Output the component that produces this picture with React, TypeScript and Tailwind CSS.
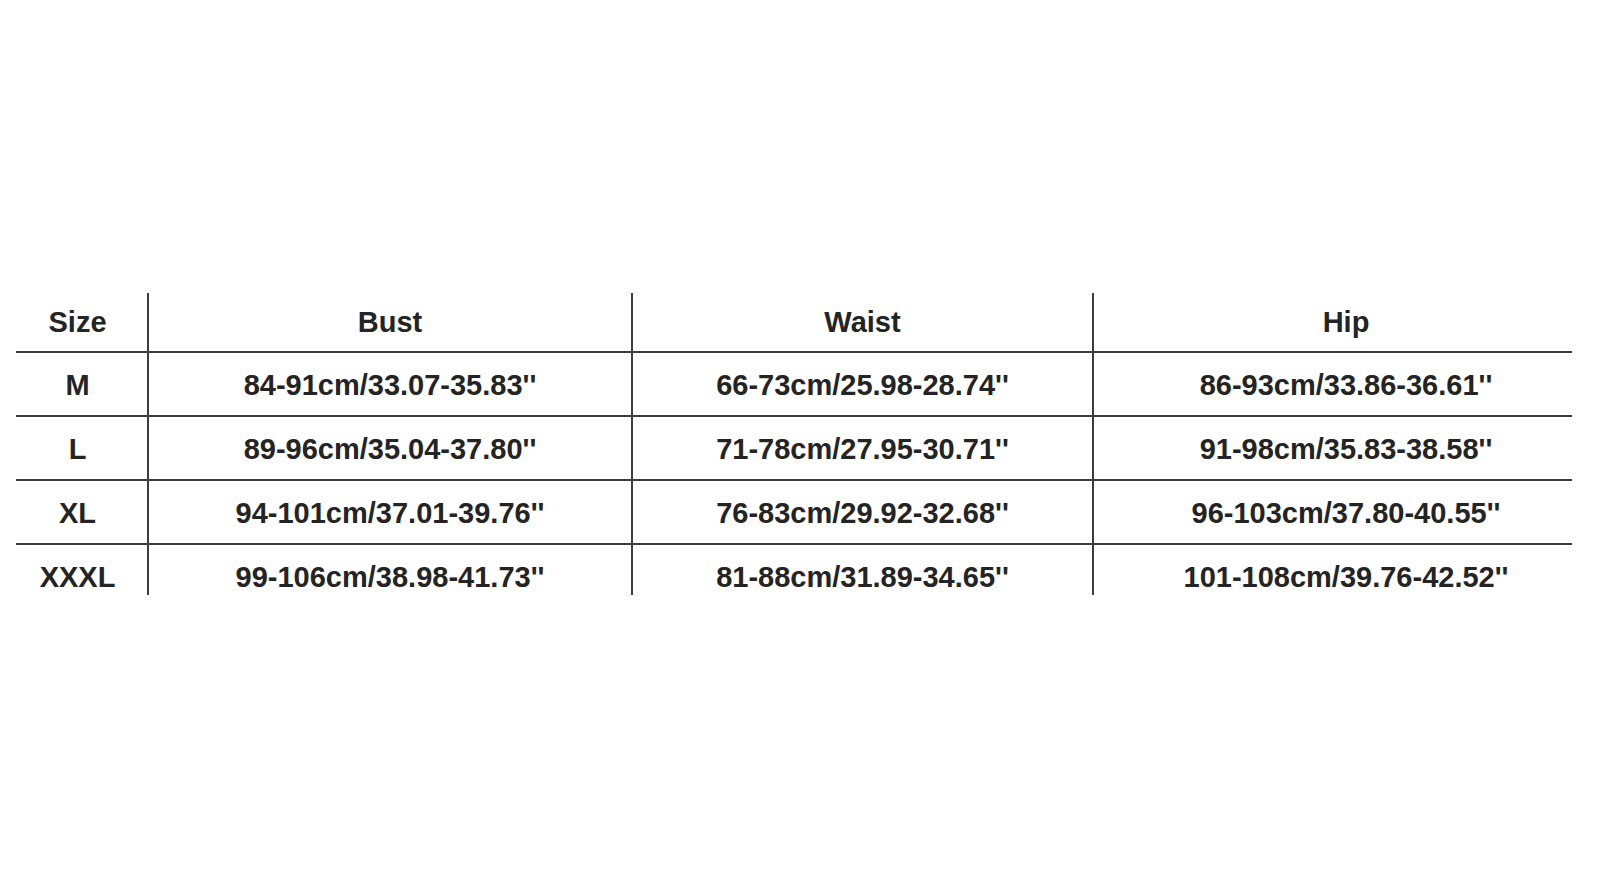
const HEADERS = ["Size", "Bust", "Waist", "Hip"];

const ROWS: string[][] = [
  ["M", "84-91cm/33.07-35.83''", "66-73cm/25.98-28.74''", "86-93cm/33.86-36.61''"],
  ["L", "89-96cm/35.04-37.80''", "71-78cm/27.95-30.71''", "91-98cm/35.83-38.58''"],
  ["XL", "94-101cm/37.01-39.76''", "76-83cm/29.92-32.68''", "96-103cm/37.80-40.55''"],
  ["XXXL", "99-106cm/38.98-41.73''", "81-88cm/31.89-34.65''", "101-108cm/39.76-42.52''"],
];

// column widths plus a small nudge so the text sits where the original puts it
const COLS = ["w-[131px] pr-[8px]", "w-[484px]", "w-[461px]", "w-[480px] pl-[26px]"];

function Row({ cells, header }: { cells: string[]; header?: boolean }) {
  return (
    <div
      className={
        header
          ? "flex h-[58px] shrink-0"
          : "flex h-[64px] shrink-0 border-t-2 border-[#3c3c3c]"
      }
    >
      {cells.map((cell, i) => (
        <div
          key={i}
          className={
            "flex items-center justify-center " +
            COLS[i] +
            (i > 0 ? " border-l-2 border-[#3c3c3c]" : "") +
            (header ? " pt-[1px]" : " pt-[2px]")
          }
        >
          <span className="text-[29px] font-bold leading-none text-[#242424]">{cell}</span>
        </div>
      ))}
    </div>
  );
}

export default function App() {
  return (
    <div
      className="h-[894px] w-full bg-white pl-[16px] pt-[293px]"
      style={{ fontFamily: '"Liberation Sans", Arial, sans-serif' }}
    >
      {/* the last row is cut off in the original, so clip the table */}
      <div className="flex h-[302px] w-[1556px] flex-col overflow-hidden">
        <Row cells={HEADERS} header />
        {ROWS.map((row) => (
          <Row key={row[0]} cells={row} />
        ))}
      </div>
    </div>
  );
}
